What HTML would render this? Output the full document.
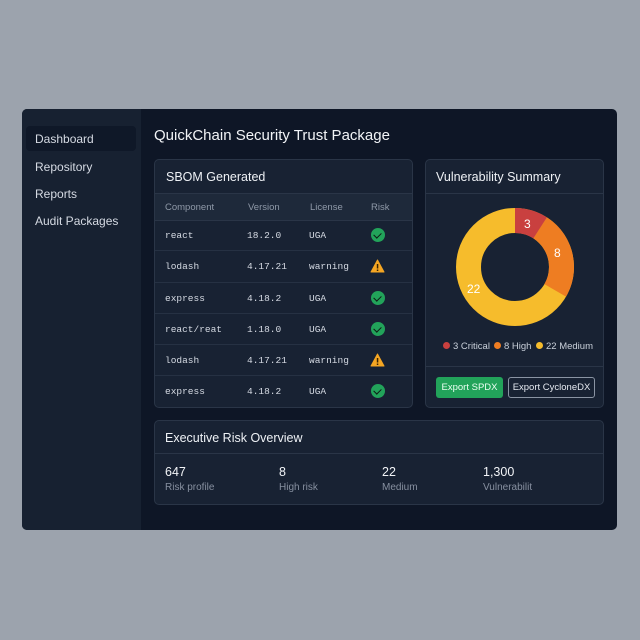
<!DOCTYPE html>
<html><head><style>
*{box-sizing:border-box;margin:0;padding:0}
body{width:640px;height:640px;background:#9ca3ad;font-family:"Liberation Sans",sans-serif;position:relative;overflow:hidden;color:#e5e9f0}
.win{position:absolute;left:22px;top:109px;width:595px;height:421px;background:#0e1626;border-radius:5px;overflow:hidden}
.side{position:absolute;left:0;top:0;width:119px;height:421px;background:#172131}
.nav{position:absolute;left:13px;font-size:12px;color:#d5dae3}
.act{position:absolute;left:4px;top:17px;width:110px;height:25px;background:#0f1828;border-radius:4px}
.card{position:absolute;background:#182233;border:1px solid #2a3547;border-radius:5px}
.t{position:absolute;font-size:12.5px;color:#eef1f5}
.hl{position:absolute;left:0;right:0;height:1px;background:#2a3547}
.th{position:absolute;font-size:9.5px;color:#8f99a8}
.mono{position:absolute;font-family:"Liberation Mono",monospace;font-size:9.5px;color:#d5dae3}
.ok{position:absolute;width:14px;height:14px;border-radius:50%;background:#22a35a}
.ok:after{content:"";position:absolute;left:4px;top:3px;width:4px;height:6px;border:solid #0d1b14;border-width:0 1.6px 1.6px 0;transform:rotate(45deg)}
.big{position:absolute;font-size:12.5px;color:#f2f4f7}
.sm{position:absolute;font-size:10px;color:#8790a0}
.lg{position:absolute;top:181px;font-size:9.5px;color:#c9d0da;white-space:nowrap}
.lg i{display:inline-block;width:7px;height:7px;border-radius:50%;margin-right:3px;vertical-align:0}
</style></head><body>
<div class="win">
 <div class="side">
  <div class="act"></div>
  <div class="nav" style="top:23px">Dashboard</div>
  <div class="nav" style="top:51px">Repository</div>
  <div class="nav" style="top:78px">Reports</div>
  <div class="nav" style="top:105px">Audit Packages</div>
 </div>
 <div style="position:absolute;left:132px;top:18px;font-size:15px;color:#f2f4f7">QuickChain Security Trust Package</div>
</div>

<div class="card" style="left:154px;top:159px;width:259px;height:249px">
 <div class="t" style="left:11px;top:10px">SBOM Generated</div>
 <div class="hl" style="top:33px"></div>
 <div style="position:absolute;left:0;right:0;top:34px;height:26px;background:#1e293a"></div>
 <div class="th" style="left:10px;top:42px">Component</div>
 <div class="th" style="left:93px;top:42px">Version</div>
 <div class="th" style="left:155px;top:42px">License</div>
 <div class="th" style="left:216px;top:42px">Risk</div>
 <div class="hl" style="top:60px"></div>
</div>

<div class="card" style="left:425px;top:159px;width:179px;height:249px">
 <div class="t" style="left:10px;top:10px">Vulnerability Summary</div>
 <div class="hl" style="top:33px"></div>
 <div class="hl" style="top:206px"></div>
 <div class="lg" style="left:17px"><i style="background:#c9403f"></i>3 Critical</div>
 <div class="lg" style="left:68px"><i style="background:#ee7d22"></i>8 High</div>
 <div class="lg" style="left:110px"><i style="background:#f6bc2c"></i>22 Medium</div>
 <div style="position:absolute;left:10px;top:217px;width:67px;height:21px;background:#22a35a;border-radius:3px;font-size:9.5px;color:#eafff2;text-align:center;line-height:21px;white-space:nowrap">Export SPDX</div>
 <div style="position:absolute;left:82px;top:217px;width:87px;height:21px;border:1px solid #8a94a3;border-radius:3px;font-size:9.5px;color:#e5e9f0;text-align:center;line-height:19px;white-space:nowrap">Export CycloneDX</div>
</div>
<svg style="position:absolute;left:455px;top:207px" width="120" height="120" viewBox="0 0 120 120">
 <g transform="rotate(-90 60 60)" fill="none" stroke-width="25">
  <circle cx="60" cy="60" r="46.5" stroke="#f6bc2c"/>
  <circle cx="60" cy="60" r="46.5" stroke="#ee7d22" stroke-dasharray="0 26.56 70.83 200"/>
  <circle cx="60" cy="60" r="46.5" stroke="#c9403f" stroke-dasharray="26.56 300"/>
 </g>
 <text x="69" y="21" fill="#fff" font-size="12" font-family="Liberation Sans">3</text>
 <text x="99" y="50" fill="#fff" font-size="12" font-family="Liberation Sans">8</text>
 <text x="12" y="86" fill="#fff" font-size="12" font-family="Liberation Sans">22</text>
</svg>

<div class="card" style="left:154px;top:420px;width:450px;height:85px">
 <div class="t" style="left:10px;top:10px">Executive Risk Overview</div>
 <div class="hl" style="top:32px"></div>
 <div class="big" style="left:10px;top:44px">647</div><div class="sm" style="left:10px;top:61px">Risk profile</div>
 <div class="big" style="left:124px;top:44px">8</div><div class="sm" style="left:124px;top:61px">High risk</div>
 <div class="big" style="left:227px;top:44px">22</div><div class="sm" style="left:227px;top:61px">Medium</div>
 <div class="big" style="left:328px;top:44px">1,300</div><div class="sm" style="left:328px;top:61px">Vulnerabilit</div>
</div>

<div style="position:absolute;left:155px;top:220px;width:257px">
 <div style="position:relative;height:31.3px;border-bottom:1px solid #263143"><div class="mono" style="left:10px;top:10px">react</div><div class="mono" style="left:92px;top:10px">18.2.0</div><div class="mono" style="left:154px;top:10px">UGA</div><div class="ok" style="left:216px;top:8px"></div></div>
 <div style="position:relative;height:31.3px;border-bottom:1px solid #263143"><div class="mono" style="left:10px;top:10px">lodash</div><div class="mono" style="left:92px;top:10px">4.17.21</div><div class="mono" style="left:154px;top:10px">warning</div><svg style="position:absolute;left:215px;top:8px" width="15" height="14"><path d="M7.5 1 L14 13 L1 13 Z" fill="#f5a623" stroke="#f5a623" stroke-linejoin="round"/><rect x="6.8" y="5" width="1.5" height="4.5" fill="#3a2400"/><rect x="6.8" y="10.5" width="1.5" height="1.5" fill="#3a2400"/></svg></div>
 <div style="position:relative;height:31.3px;border-bottom:1px solid #263143"><div class="mono" style="left:10px;top:10px">express</div><div class="mono" style="left:92px;top:10px">4.18.2</div><div class="mono" style="left:154px;top:10px">UGA</div><div class="ok" style="left:216px;top:8px"></div></div>
 <div style="position:relative;height:31.3px;border-bottom:1px solid #263143"><div class="mono" style="left:10px;top:10px">react/reat</div><div class="mono" style="left:92px;top:10px">1.18.0</div><div class="mono" style="left:154px;top:10px">UGA</div><div class="ok" style="left:216px;top:8px"></div></div>
 <div style="position:relative;height:31.3px;border-bottom:1px solid #263143"><div class="mono" style="left:10px;top:10px">lodash</div><div class="mono" style="left:92px;top:10px">4.17.21</div><div class="mono" style="left:154px;top:10px">warning</div><svg style="position:absolute;left:215px;top:8px" width="15" height="14"><path d="M7.5 1 L14 13 L1 13 Z" fill="#f5a623" stroke="#f5a623" stroke-linejoin="round"/><rect x="6.8" y="5" width="1.5" height="4.5" fill="#3a2400"/><rect x="6.8" y="10.5" width="1.5" height="1.5" fill="#3a2400"/></svg></div>
 <div style="position:relative;height:31.3px"><div class="mono" style="left:10px;top:10px">express</div><div class="mono" style="left:92px;top:10px">4.18.2</div><div class="mono" style="left:154px;top:10px">UGA</div><div class="ok" style="left:216px;top:8px"></div></div>
</div>
</body></html>
